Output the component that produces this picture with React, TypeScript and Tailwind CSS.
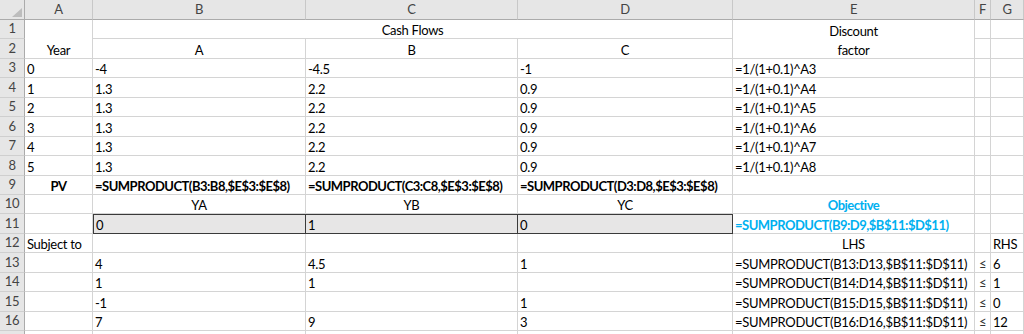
import React from "react";

// Sheet cell styles
const cell =
  "border-r border-b border-[#d4d4d4] flex items-end px-[2px] whitespace-nowrap overflow-visible leading-[15px]";
const varCell = "bg-[#e7e6e6] border-[#3a3a3a] flex items-end px-[2px] leading-[15px]";
const colHead =
  "bg-[#e6e6e6] border-r border-r-[#c8c8c8] border-b border-b-[#ababab] flex items-center justify-center text-[#444]";
const rowHead =
  "bg-[#e6e6e6] border-b border-b-[#cfcfcf] border-r border-r-[#ababab] flex items-center justify-center text-[#444]";
const bold = " font-bold tracking-[-0.5px]";

function RowNum({ n }: { n: string }) {
  return <div className={rowHead}>{n}</div>;
}

function Corner() {
  return (
    <div className="bg-[#e6e6e6] border-r border-r-[#ababab] border-b border-b-[#ababab] relative">
      <svg width="25" height="20" className="absolute left-0 top-0">
        <polygon points="22,8 22,17 12,17" fill="#bdbdbd" />
      </svg>
    </div>
  );
}

function DataRow({
  n,
  a,
  b,
  c,
  d,
  e,
}: {
  n: string;
  a: string;
  b: string;
  c: string;
  d: string;
  e: string;
}) {
  return (
    <>
      <RowNum n={n} />
      <div className={cell}>{a}</div>
      <div className={cell}>{b}</div>
      <div className={cell}>{c}</div>
      <div className={cell}>{d}</div>
      <div className={cell}>{e}</div>
      <div className={cell}></div>
      <div className={cell}></div>
    </>
  );
}

function ConstraintRow({
  n,
  b,
  c,
  d,
  rhs,
}: {
  n: string;
  b: string;
  c: string;
  d: string;
  rhs: string;
}) {
  return (
    <>
      <RowNum n={n} />
      <div className={cell}></div>
      <div className={cell}>{b}</div>
      <div className={cell}>{c}</div>
      <div className={cell}>{d}</div>
      <div className={cell}>
        =SUMPRODUCT(B{n}:D{n},$B$11:$D$11)
      </div>
      <div className={cell + " justify-center text-[#333]"}>≤</div>
      <div className={cell}>{rhs}</div>
    </>
  );
}

export default function App() {
  const years = ["0", "1", "2", "3", "4", "5"];
  return (
    <div className="w-[1024px] h-[334px] overflow-hidden bg-white text-black font-[Lato,sans-serif] text-[13px] tracking-[-0.3px]">
      <div className="grid grid-cols-[25px_68px_213px_212px_215px_242px_16px_33px] grid-rows-[20px_19px_20px_19px_20px_19px_20px_19px_20px_19px_19px_20px_19px_20px_19px_20px_19px_3px]">
        {/* column letters */}
        <Corner />
        <div className={colHead}>A</div>
        <div className={colHead}>B</div>
        <div className={colHead}>C</div>
        <div className={colHead}>D</div>
        <div className={colHead}>E</div>
        <div className={colHead}>F</div>
        <div className={colHead}>G</div>

        {/* rows 1-2: titles */}
        <RowNum n="1" />
        <div className={cell + " row-span-2 justify-center"}>Year</div>
        <div className={cell + " col-span-3 justify-center"}>Cash Flows</div>
        <div className="border-r border-b border-[#d4d4d4] row-span-2 flex flex-col items-center pt-[2px] leading-[19px]">
          <span>Discount</span>
          <span>factor</span>
        </div>
        <div className={cell}></div>
        <div className={cell}></div>

        <RowNum n="2" />
        <div className={cell + " justify-center"}>A</div>
        <div className={cell + " justify-center"}>B</div>
        <div className={cell + " justify-center"}>C</div>
        <div className={cell}></div>
        <div className={cell}></div>

        {/* rows 3-8: yearly cash flows */}
        {years.map((y, i) => (
          <DataRow
            key={y}
            n={String(i + 3)}
            a={y}
            b={i === 0 ? "-4" : "1.3"}
            c={i === 0 ? "-4.5" : "2.2"}
            d={i === 0 ? "-1" : "0.9"}
            e={`=1/(1+0.1)^A${i + 3}`}
          />
        ))}

        {/* row 9: present values */}
        <RowNum n="9" />
        <div className={cell + " justify-center" + bold}>PV</div>
        <div className={cell + bold}>=SUMPRODUCT(B3:B8,$E$3:$E$8)</div>
        <div className={cell + bold}>=SUMPRODUCT(C3:C8,$E$3:$E$8)</div>
        <div className={cell + bold}>=SUMPRODUCT(D3:D8,$E$3:$E$8)</div>
        <div className={cell}></div>
        <div className={cell}></div>
        <div className={cell}></div>

        {/* row 10: decision labels */}
        <RowNum n="10" />
        <div className={cell}></div>
        <div className={cell + " justify-center"}>YA</div>
        <div className={cell + " justify-center"}>YB</div>
        <div className={cell + " justify-center"}>YC</div>
        <div className={cell + " justify-center text-[#00b0f0]" + bold}>Objective</div>
        <div className={cell}></div>
        <div className={cell}></div>

        {/* row 11: decision variables */}
        <RowNum n="11" />
        <div className={cell}></div>
        <div className={varCell + " border"}>0</div>
        <div className={varCell + " border-t border-b border-r"}>1</div>
        <div className={varCell + " border-t border-b border-r"}>0</div>
        <div className={cell + " text-[#00b0f0]" + bold}>=SUMPRODUCT(B9:D9,$B$11:$D$11)</div>
        <div className={cell}></div>
        <div className={cell}></div>

        {/* row 12: constraint headings */}
        <RowNum n="12" />
        <div className={cell}>Subject to</div>
        <div className={cell}></div>
        <div className={cell}></div>
        <div className={cell}></div>
        <div className={cell + " justify-center"}>LHS</div>
        <div className={cell}></div>
        <div className={cell}>RHS</div>

        {/* rows 13-16: constraints */}
        <ConstraintRow n="13" b="4" c="4.5" d="1" rhs="6" />
        <ConstraintRow n="14" b="1" c="1" d="" rhs="1" />
        <ConstraintRow n="15" b="-1" c="" d="1" rhs="0" />
        <ConstraintRow n="16" b="7" c="9" d="3" rhs="12" />

        {/* row 17, cut off */}
        <div className="bg-[#e6e6e6] border-r border-r-[#ababab]"></div>
        <div className="border-r border-[#d4d4d4]"></div>
        <div className="border-r border-[#d4d4d4]"></div>
        <div className="border-r border-[#d4d4d4]"></div>
        <div className="border-r border-[#d4d4d4]"></div>
        <div className="border-r border-[#d4d4d4]"></div>
        <div className="border-r border-[#d4d4d4]"></div>
        <div className="border-r border-[#d4d4d4]"></div>
      </div>
    </div>
  );
}
